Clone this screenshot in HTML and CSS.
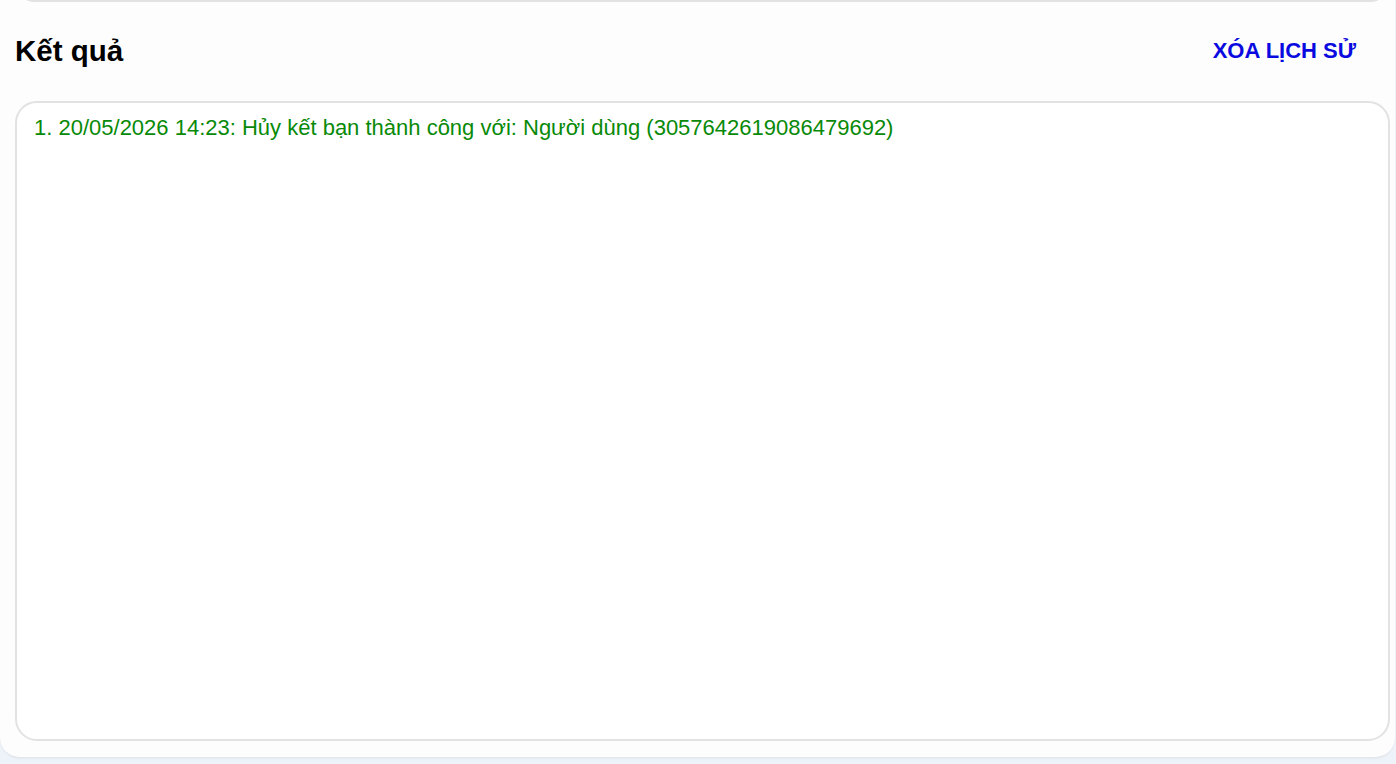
FILE: index.html
```html
<!DOCTYPE html>
<html lang="vi">
<head>
<meta charset="utf-8">
<title>Kết quả</title>
<link rel="stylesheet" href="styles.css">
</head>
<body>
<div class="card">
  <div class="prev-box"></div>
  <div class="header">
    <h2 class="title">Kết quả</h2>
    <button class="clear-btn" type="button">XÓA LỊCH SỬ</button>
  </div>
  <div class="results">
    <div class="line success">1. 20/05/2026 14:23: Hủy kết bạn thành công với: Người dùng (3057642619086479692)</div>
  </div>
</div>
</body>
</html>
```

FILE: styles.css
```css
html, body {
  margin: 0;
  padding: 0;
}
body {
  background: #eef2f9;
  font-family: "Liberation Sans", Arial, Helvetica, sans-serif;
  height: 764px;
  overflow: hidden;
}
.card {
  margin-top: -38px;
  width: 1395px;
  background: #fdfdfd;
  border-radius: 20px;
  border-bottom: 1px solid #e3e6ec;
  box-shadow: 0 1px 2px rgba(0, 0, 0, 0.04);
  padding: 0 5px 16px 15px;
  box-sizing: border-box;
}
.prev-box {
  height: 40px;
  width: 1375px;
  box-sizing: border-box;
  border: 2px solid #e2e2e2;
  border-top: none;
  border-radius: 0 0 20px 20px;
  background: #fff;
}
.header {
  display: flex;
  justify-content: space-between;
  align-items: center;
  height: 99px;
  padding-right: 34px;
  padding-bottom: 2px;
  box-sizing: border-box;
}
.title {
  margin: 0;
  font-size: 29.5px;
  font-weight: bold;
  color: #000;
}
.clear-btn {
  border: none;
  background: transparent;
  font-family: inherit;
  font-size: 22px;
  font-weight: bold;
  color: #0a0ae0;
  padding: 0;
  cursor: pointer;
}
.results {
  width: 1375px;
  height: 640px;
  box-sizing: border-box;
  border: 2px solid #e2e2e2;
  border-radius: 22px;
  background: #fff;
  padding: 12px 17px;
}
.line {
  font-size: 22px;
  line-height: 26px;
}
.success {
  color: #088a08;
}
```
